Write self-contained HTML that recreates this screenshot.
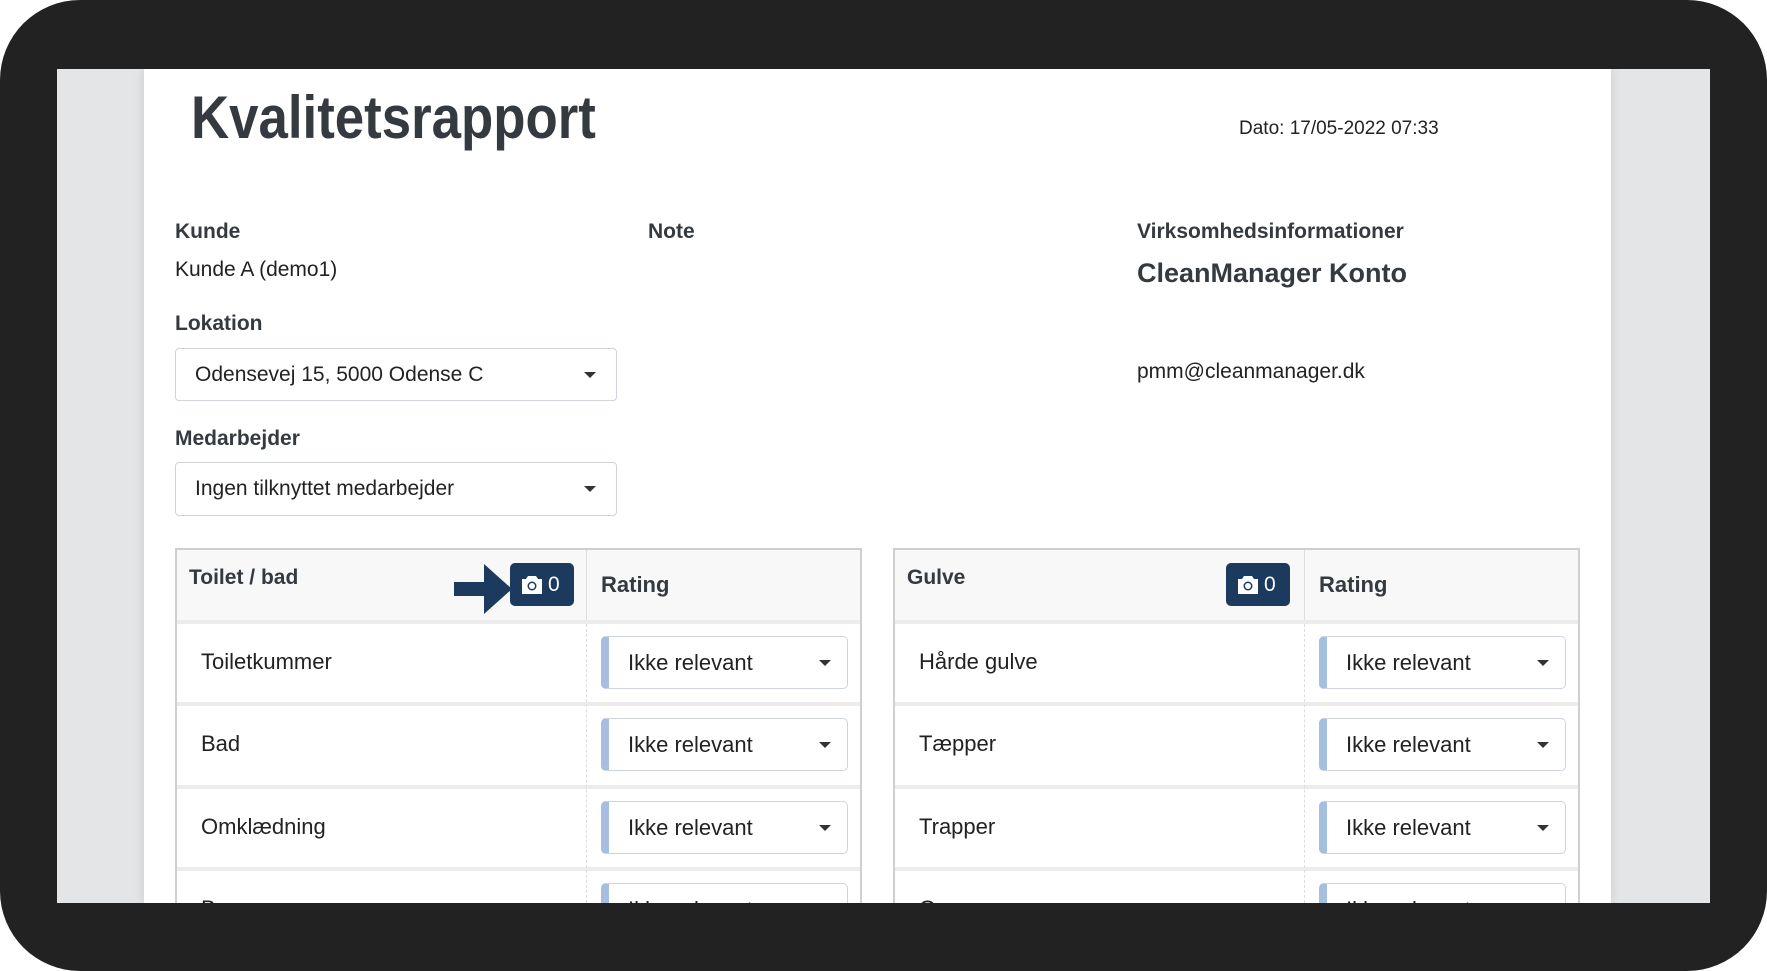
<!DOCTYPE html>
<html><head><meta charset="utf-8"><style>
*{box-sizing:border-box;margin:0;padding:0}
body{width:1767px;height:971px;background:#fff;position:relative;overflow:hidden;font-family:"Liberation Sans",Arial,sans-serif;color:#343a40}
.frame{position:absolute;left:0;top:0;width:1767px;height:971px;background:#222;border-radius:80px}
.view{position:absolute;left:57px;top:69px;width:1653px;height:834px;background:#e4e5e6;overflow:hidden}
.page{position:absolute;left:87px;top:0;width:1467px;height:834px;background:#fff;box-shadow:0 0 10px rgba(0,0,0,.12)}
.a{position:absolute;white-space:nowrap}
.b{font-weight:bold}
.sel{position:absolute;border:1px solid #ced4da;border-radius:4px;background:#fff;font-size:21px;color:#222}
.sel span{position:absolute;left:19px;top:50%;transform:translateY(-50%)}
.car{position:absolute;width:0;height:0;border-left:6px solid transparent;border-right:6px solid transparent;border-top:6px solid #333;top:50%;margin-top:-3px}
.tbl{position:absolute;top:479px;height:360px;border:2px solid #cfcfcf;border-bottom:none;background:#fff}
.hd{position:absolute;left:0;right:0;top:0;height:70px;background:#f8f8f8}
.sep{position:absolute;left:0;right:0;height:4px;background:#ececec}
.vl{position:absolute;top:0;bottom:0;border-left:1px dashed #ddd}
.vls{position:absolute;top:0;height:70px;border-left:1px solid #ddd}
.rt{font-size:22px;color:#222}
.cam{position:absolute;width:64px;height:43px;background:#1c3a5e;border-radius:5px;color:#fff;font-size:21px}
.rs{position:absolute;height:53px;border:1px solid #ced4da;border-left:8px solid #a6bfe0;border-radius:5px;background:#fff}
.rs span{position:absolute;left:19px;top:50%;transform:translateY(-50%);font-size:22px;color:#222}
</style></head><body>
<div class="frame"></div>
<div class="view"><div class="page">
<div class="a b" style="left:47px;top:14px;font-size:60px;color:#343a40;transform:scaleX(0.88);transform-origin:0 0">Kvalitetsrapport</div>
<div class="a" style="left:1095px;top:49px;font-size:19px;color:#222">Dato: 17/05-2022 07:33</div>
<div class="a b" style="left:31px;top:151px;font-size:21px">Kunde</div>
<div class="a" style="left:31px;top:189px;font-size:21px;color:#222">Kunde A (demo1)</div>
<div class="a b" style="left:31px;top:243px;font-size:21px">Lokation</div>
<div class="sel" style="left:31px;top:279px;width:442px;height:53px"><span>Odensevej 15, 5000 Odense C</span><i class="car" style="right:20px"></i></div>
<div class="a b" style="left:31px;top:358px;font-size:21px">Medarbejder</div>
<div class="sel" style="left:31px;top:393px;width:442px;height:54px"><span>Ingen tilknyttet medarbejder</span><i class="car" style="right:20px"></i></div>
<div class="a b" style="left:504px;top:151px;font-size:21px">Note</div>
<div class="a b" style="left:993px;top:151px;font-size:21px">Virksomhedsinformationer</div>
<div class="a b" style="left:993px;top:189px;font-size:27px">CleanManager Konto</div>
<div class="a" style="left:993px;top:291px;font-size:21px;color:#222">pmm@cleanmanager.dk</div>

<!-- left table -->
<div class="tbl" style="left:31px;width:687px">
 <div class="hd"></div><div class="vls" style="left:409px"></div>
 <div class="a b" style="left:12px;top:16px;font-size:21px">Toilet / bad</div>
 <div class="a b" style="left:424px;top:22px;font-size:22px">Rating</div>
 <svg style="position:absolute;left:277px;top:14px" width="58" height="50" viewBox="0 0 58 50"><path d="M0 18h30V0l28 25-28 25V32H0z" fill="#1c3a5e"/></svg>
 <div class="cam" style="left:333px;top:13px"><svg style="position:absolute;left:11px;top:13px" width="22" height="18" viewBox="0 0 22 18"><path d="M7 0h8l2 3h4v15H1V3h4z" fill="#fff"/><circle cx="11" cy="10" r="4.5" fill="#1c3a5e"/><circle cx="11" cy="10" r="3" fill="#fff"/></svg><span style="position:absolute;left:38px;top:10px">0</span></div>
 <div class="sep" style="top:70px"></div><div class="sep" style="top:152px"></div><div class="sep" style="top:235px"></div><div class="sep" style="top:317px"></div>
 <div class="vl" style="left:409px;top:74px"></div>
 <div class="a rt" style="left:24px;top:99px">Toiletkummer</div>
 <div class="a rt" style="left:24px;top:181px">Bad</div>
 <div class="a rt" style="left:24px;top:264px">Omklædning</div>
 <div class="a rt" style="left:24px;top:346px">Bu</div>
 <div class="rs" style="left:424px;top:86px;width:247px"><span>Ikke relevant</span><i class="car" style="right:16px"></i></div>
 <div class="rs" style="left:424px;top:168px;width:247px"><span>Ikke relevant</span><i class="car" style="right:16px"></i></div>
 <div class="rs" style="left:424px;top:251px;width:247px"><span>Ikke relevant</span><i class="car" style="right:16px"></i></div>
 <div class="rs" style="left:424px;top:333px;width:247px"><span>Ikke relevant</span></div>
</div>

<!-- right table -->
<div class="tbl" style="left:749px;width:687px">
 <div class="hd"></div><div class="vls" style="left:409px"></div>
 <div class="a b" style="left:12px;top:16px;font-size:21px">Gulve</div>
 <div class="a b" style="left:424px;top:22px;font-size:22px">Rating</div>
 <div class="cam" style="left:331px;top:13px"><svg style="position:absolute;left:11px;top:13px" width="22" height="18" viewBox="0 0 22 18"><path d="M7 0h8l2 3h4v15H1V3h4z" fill="#fff"/><circle cx="11" cy="10" r="4.5" fill="#1c3a5e"/><circle cx="11" cy="10" r="3" fill="#fff"/></svg><span style="position:absolute;left:38px;top:10px">0</span></div>
 <div class="sep" style="top:70px"></div><div class="sep" style="top:152px"></div><div class="sep" style="top:235px"></div><div class="sep" style="top:317px"></div>
 <div class="vl" style="left:409px;top:74px"></div>
 <div class="a rt" style="left:24px;top:99px">Hårde gulve</div>
 <div class="a rt" style="left:24px;top:181px">Tæpper</div>
 <div class="a rt" style="left:24px;top:264px">Trapper</div>
 <div class="a rt" style="left:24px;top:346px">Og</div>
 <div class="rs" style="left:424px;top:86px;width:247px"><span>Ikke relevant</span><i class="car" style="right:16px"></i></div>
 <div class="rs" style="left:424px;top:168px;width:247px"><span>Ikke relevant</span><i class="car" style="right:16px"></i></div>
 <div class="rs" style="left:424px;top:251px;width:247px"><span>Ikke relevant</span><i class="car" style="right:16px"></i></div>
 <div class="rs" style="left:424px;top:333px;width:247px"><span>Ikke relevant</span></div>
</div>
</div></div>
</body></html>
